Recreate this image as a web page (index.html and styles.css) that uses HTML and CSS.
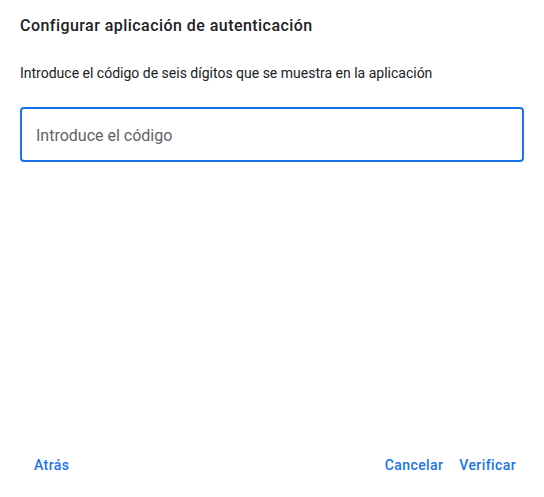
FILE: index.html
```html
<!DOCTYPE html>
<html lang="es">
<head>
<meta charset="utf-8">
<link rel="stylesheet" href="styles.css">
</head>
<body>
<div class="dialog">
  <h1 class="title">Configurar aplicación de autenticación</h1>
  <p class="desc">Introduce el código de seis dígitos que se muestra en la aplicación</p>
  <div class="field"><span class="placeholder">Introduce el código</span></div>
  <div class="spacer"></div>
  <div class="actions">
    <button class="btn">Atrás</button>
    <div class="right">
      <button class="btn">Cancelar</button>
      <button class="btn">Verificar</button>
    </div>
  </div>
</div>
</body>
</html>
```
FILE: styles.css
```css
html, body { margin: 0; padding: 0; background: #fff; }
body { font-family: Roboto, "Noto Sans", sans-serif; }
.dialog {
  width: 544px; height: 497px; box-sizing: border-box;
  padding: 14px 20px 0 20px;
  display: flex; flex-direction: column;
}
.title {
  margin: 0; font-size: 16px; font-weight: 500; line-height: 24px;
  color: #202124; letter-spacing: 0.45px;
}
.desc {
  margin: 25px 0 0 0; font-size: 14px; line-height: 20px; color: #202124;
}
.field {
  margin-top: 24px; height: 55px; box-sizing: border-box;
  border: 2px solid #1a73e8; border-radius: 4px;
  display: flex; align-items: center; padding: 2px 14px 0 14px;
}
.placeholder { font-size: 16px; color: #5f6368; }
.spacer { flex: 1; }
.actions {
  display: flex; justify-content: space-between; align-items: center;
  margin: 0 0 16px 0; height: 32px;
}
.right { display: flex; }
.btn {
  font-family: Roboto, sans-serif; font-size: 14px; font-weight: 500;
  color: #1a73e8; background: none; border: none; padding: 0 8px;
  height: 32px; line-height: 32px; letter-spacing: 0.4px; cursor: pointer;
}
.actions > .btn { padding-left: 14px; }
```
